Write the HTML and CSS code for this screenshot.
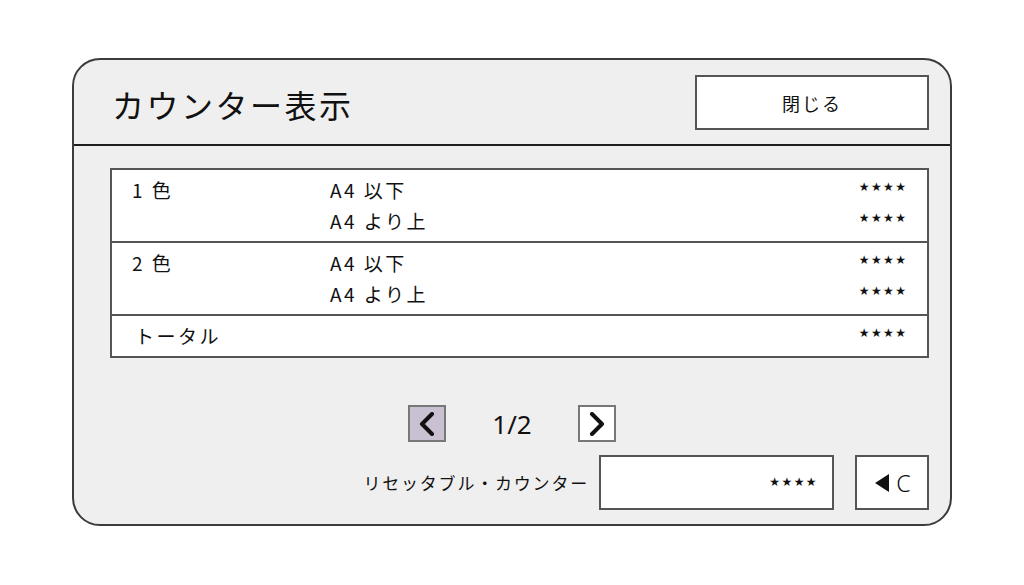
FILE: index.html
```html
<!DOCTYPE html>
<html lang="ja">
<head>
    <meta charset="utf-8">
    <title>カウンター表示</title>
    <link rel="stylesheet" href="styles.css">
</head>
<body>
    <div class="panel">
        <header class="panel-head">
            <h1 class="title">カウンター表示</h1>
            <button type="button" class="close-btn">閉じる</button>
        </header>

        <div class="panel-body">
            <div class="counter-table">
                <div class="row">
                    <div class="col-name">1 色</div>
                    <div class="col-size">
                        <div>A4 以下</div>
                        <div>A4 より上</div>
                    </div>
                    <div class="col-value">
                        <div>★★★★</div>
                        <div>★★★★</div>
                    </div>
                </div>
                <div class="row">
                    <div class="col-name">2 色</div>
                    <div class="col-size">
                        <div>A4 以下</div>
                        <div>A4 より上</div>
                    </div>
                    <div class="col-value">
                        <div>★★★★</div>
                        <div>★★★★</div>
                    </div>
                </div>
                <div class="row">
                    <div class="col-name total">トータル</div>
                    <div class="col-size"></div>
                    <div class="col-value">
                        <div>★★★★</div>
                    </div>
                </div>
            </div>

            <div class="pager">
                <button type="button" class="page-btn prev">
                    <svg width="16" height="24" viewBox="0 0 16 24"><polyline points="13,2 3,12 13,22" fill="none" stroke="#111" stroke-width="4" stroke-linecap="round" stroke-linejoin="round"/></svg>
                </button>
                <span class="page-num">1/2</span>
                <button type="button" class="page-btn next">
                    <svg width="16" height="24" viewBox="0 0 16 24"><polyline points="3,2 13,12 3,22" fill="none" stroke="#111" stroke-width="4" stroke-linecap="round" stroke-linejoin="round"/></svg>
                </button>
            </div>

            <div class="reset-row">
                <span class="reset-label">リセッタブル・カウンター</span>
                <div class="reset-field">★★★★</div>
                <button type="button" class="clear-btn">
                    <svg width="14" height="18" viewBox="0 0 14 18"><polygon points="14,0 14,18 0,9" fill="#111"/></svg>
                    <span>C</span>
                </button>
            </div>
        </div>
    </div>
</body>
</html>
```

FILE: styles.css
```css
body {
    margin: 0;
    background: #fff;
    font-family: "Noto Sans CJK JP", "Noto Sans", sans-serif;
    color: #111;
}

.panel {
    box-sizing: border-box;
    width: 880px;
    height: 468px;
    margin: 58px 0 0 72px;
    background: #efefef;
    border: 2px solid #3c3c3c;
    border-radius: 28px;
    overflow: hidden;
}

.panel-head {
    display: flex;
    align-items: flex-start;
    justify-content: space-between;
    height: 84px;
    padding: 0 21px 0 38px;
    border-bottom: 2px solid #1e1e1e;
}

.title {
    margin: 22px 0 0;
    font-size: 32px;
    font-weight: normal;
    letter-spacing: 2.5px;
    line-height: 44px;
}

.close-btn {
    box-sizing: border-box;
    width: 234px;
    height: 55px;
    margin-top: 15px;
    background: #fff;
    border: 2px solid #555;
    font-family: inherit;
    font-size: 18px;
    letter-spacing: 2px;
    color: #111;
    padding: 0;
}

.panel-body {
    padding: 22px 21px 0 36px;
}

.counter-table {
    background: #fff;
    border: 2px solid #555;
}

.row {
    display: grid;
    grid-template-columns: 198px 1fr auto;
    padding: 4px 21px 5px 20px;
    font-size: 19px;
    letter-spacing: 2.5px;
    line-height: 31px;
}

.row + .row {
    border-top: 2px solid #555;
}

.total {
    padding-left: 3px;
}

.col-value {
    font-family: "DejaVu Sans", sans-serif;
    font-size: 12px;
    letter-spacing: 1.4px;
    text-align: right;
}

.col-value div {
    line-height: 31px;
    height: 31px;
    position: relative;
    top: -2px;
    margin-right: -1.4px;
}

.pager {
    display: flex;
    align-items: center;
    justify-content: center;
    gap: 46px;
    margin-top: 47px;
    padding-right: 15px;
}

.page-btn {
    box-sizing: border-box;
    display: flex;
    align-items: center;
    justify-content: center;
    width: 38px;
    height: 37px;
    padding: 0;
    border: 2px solid #777;
    background: #fff;
}

.page-btn.prev {
    background: #c9c1d2;
}

.page-num {
    font-family: "Noto Sans", sans-serif;
    font-size: 26px;
}

.reset-row {
    display: flex;
    align-items: center;
    justify-content: flex-end;
    margin-top: 13px;
}

.reset-label {
    font-size: 17px;
    letter-spacing: 1.8px;
    margin-right: 10px;
}

.reset-field {
    box-sizing: border-box;
    width: 235px;
    height: 55px;
    padding-right: 14px;
    background: #fff;
    border: 2px solid #555;
    font-family: "DejaVu Sans", sans-serif;
    font-size: 12px;
    letter-spacing: 1.4px;
    line-height: 51px;
    text-align: right;
}

.clear-btn {
    box-sizing: border-box;
    display: flex;
    align-items: center;
    justify-content: center;
    gap: 7px;
    width: 74px;
    height: 55px;
    margin-left: 21px;
    padding: 0 0 0 2px;
    background: #fff;
    border: 2px solid #555;
    font-family: "Noto Sans", sans-serif;
    font-size: 23px;
    font-weight: 300;
    color: #111;
}
```
